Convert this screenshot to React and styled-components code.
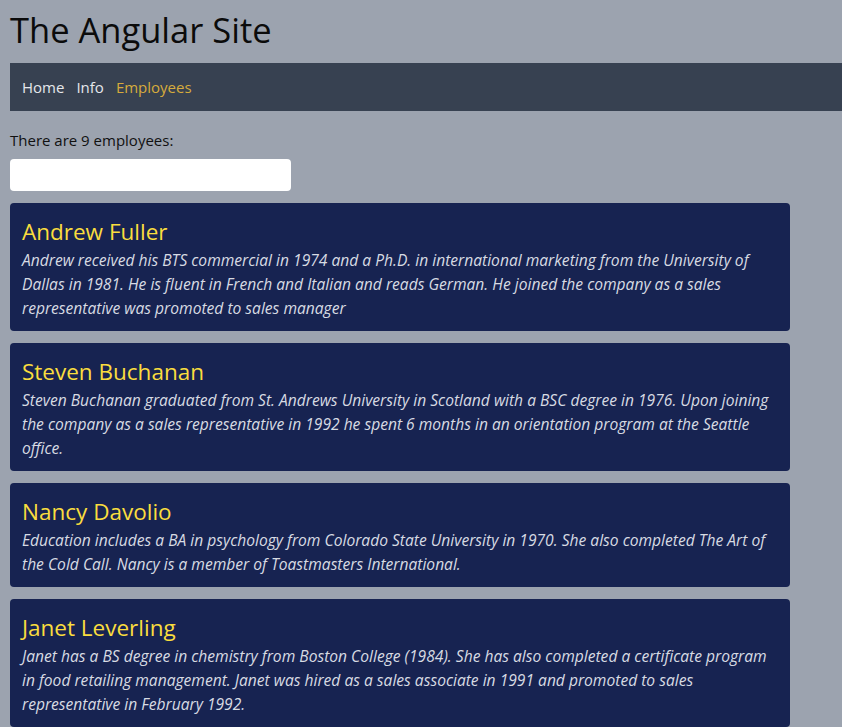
import React from 'react'
import styled, { createGlobalStyle } from 'styled-components'

const GlobalStyle = createGlobalStyle`
  html, body {
    margin: 0;
    background: #9ca3af;
    font-family: "Open Sans", "Noto Sans", sans-serif;
  }
`

const Page = styled.div`
  padding: 0 0 0 10px;
`

const Title = styled.h1`
  margin: 0;
  padding-top: 8px;
  height: 55px;
  font-size: 34.5px;
  font-weight: 400;
  line-height: 44px;
  color: #0b0b0b;
`

const Nav = styled.nav`
  display: flex;
  align-items: center;
  gap: 12px;
  height: 48px;
  padding-left: 12px;
  background: #374151;
`

const NavLink = styled.a`
  font-size: 15px;
  color: ${p => (p.$active ? '#d6ab3c' : '#e5e7eb')};
  text-decoration: none;
  cursor: pointer;
`

const Count = styled.p`
  margin: 18px 0 8px;
  font-size: 15px;
  line-height: 22px;
  color: #111;
`

const Search = styled.input`
  display: block;
  box-sizing: border-box;
  width: 281px;
  height: 32px;
  border: none;
  border-radius: 4px;
  background: #fff;
  outline: none;
`

const List = styled.div`
  display: flex;
  flex-direction: column;
  gap: 12px;
  margin-top: 12px;
`

const Card = styled.div`
  width: 780px;
  box-sizing: border-box;
  padding: 13px 12px 11px;
  background: #172351;
  border-radius: 4px;
`

const Name = styled.h2`
  margin: 0;
  font-size: 22.5px;
  font-weight: 400;
  line-height: 32px;
  color: #fadd3e;
`

const Notes = styled.p`
  margin: 0;
  font-size: 15.6px;
  font-style: italic;
  line-height: 24px;
  color: #d7dbe3;
`

const employees = [
  {
    name: 'Andrew Fuller',
    notes:
      'Andrew received his BTS commercial in 1974 and a Ph.D. in international marketing from the University of Dallas in 1981. He is fluent in French and Italian and reads German. He joined the company as a sales representative was promoted to sales manager',
  },
  {
    name: 'Steven Buchanan',
    notes:
      'Steven Buchanan graduated from St. Andrews University in Scotland with a BSC degree in 1976. Upon joining the company as a sales representative in 1992 he spent 6 months in an orientation program at the Seattle office.',
  },
  {
    name: 'Nancy Davolio',
    notes:
      'Education includes a BA in psychology from Colorado State University in 1970. She also completed The Art of the Cold Call. Nancy is a member of Toastmasters International.',
  },
  {
    name: 'Janet Leverling',
    notes:
      'Janet has a BS degree in chemistry from Boston College (1984). She has also completed a certificate program in food retailing management. Janet was hired as a sales associate in 1991 and promoted to sales representative in February 1992.',
  },
]

const App = () => (
  <Page>
    <GlobalStyle />
    <Title>The Angular Site</Title>
    <Nav>
      <NavLink>Home</NavLink>
      <NavLink>Info</NavLink>
      <NavLink $active>Employees</NavLink>
    </Nav>
    <Count>There are 9 employees:</Count>
    <Search type="text" />
    <List>
      {employees.map(e => (
        <Card key={e.name}>
          <Name>{e.name}</Name>
          <Notes>{e.notes}</Notes>
        </Card>
      ))}
    </List>
  </Page>
)

export default App
